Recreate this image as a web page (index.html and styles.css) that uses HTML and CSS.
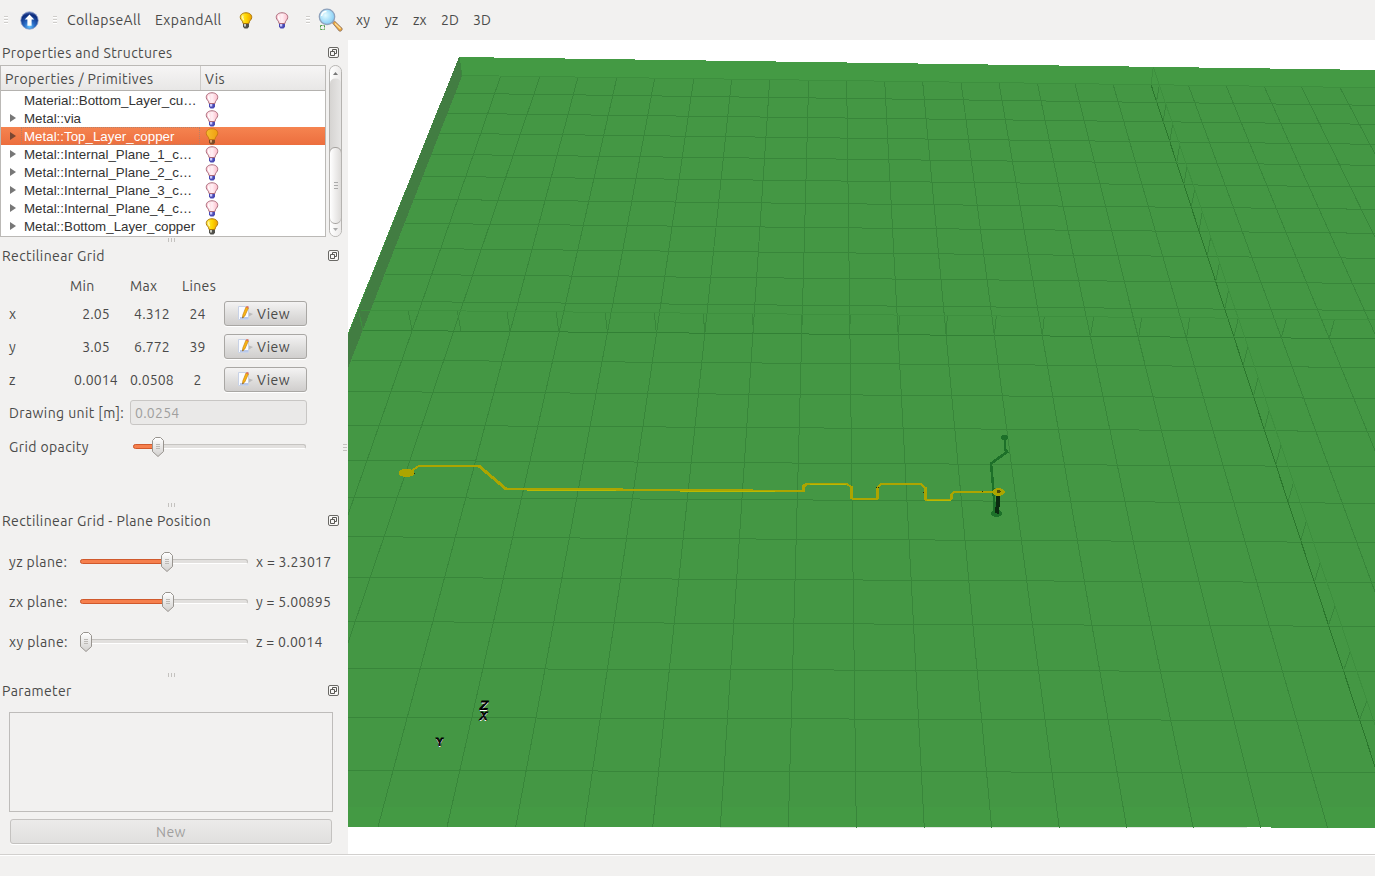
FILE: index.html
```html
<!DOCTYPE html>
<html lang="en">
<head>
<meta charset="utf-8">
<title>CSX Viewer</title>
<link rel="stylesheet" href="styles.css">
</head>
<body>
<svg class="defs" width="0" height="0" aria-hidden="true">
  <defs>
    <linearGradient id="gOn" x1="0" x2="1"><stop offset="0" stop-color="#ffe95a"/><stop offset=".5" stop-color="#ffd800"/><stop offset="1" stop-color="#f0a000"/></linearGradient>
    <linearGradient id="gSel" x1="0" x2="1"><stop offset="0" stop-color="#f6bd2e"/><stop offset="1" stop-color="#f0a010"/></linearGradient>
    <linearGradient id="gOff" x1="0" x2="1"><stop offset="0" stop-color="#ffc8d4"/><stop offset=".5" stop-color="#fff0f4"/><stop offset="1" stop-color="#ffbccb"/></linearGradient>
    <linearGradient id="gHandle" x1="0" y1="0" x2="0" y2="1"><stop offset="0" stop-color="#fff"/><stop offset="1" stop-color="#d2d0ce"/></linearGradient>
    <radialGradient id="gBlue" cx=".5" cy=".85" r=".85"><stop offset="0" stop-color="#5fc0ff"/><stop offset=".35" stop-color="#2a6bc4"/><stop offset=".8" stop-color="#0c2a7c"/><stop offset="1" stop-color="#5a76b8"/></radialGradient>
    <radialGradient id="gLens" cx=".4" cy=".4" r=".65"><stop offset="0" stop-color="#e4fbff"/><stop offset="1" stop-color="#7ecbf5"/></radialGradient>
    <symbol id="bulb-on" viewBox="0 0 14 17">
      <path d="M4 11.500h6v3.300l-1.500 1.700h-3L4 14.800z" fill="#50504a"/><path d="M5 12h2v2.500H5z" fill="#c8c8c0"/>
      <path d="M7 .8c3.900 0 6 2.200 5.700 4.800-.2 2.300-2.500 3.100-2.800 5.900H4.100C3.800 8.700 1.500 7.900 1.300 5.600 1 3 3.100.8 7 .8z" fill="url(#gOn)" stroke="#a87408"/>
      <path d="M4 3.500c-.8 1.600-.2 3.200.6 4.600" fill="none" stroke="#fff9b0" stroke-width="1.300"/>
    </symbol>
    <symbol id="bulb-sel" viewBox="0 0 14 17">
      <path d="M4 11.500h6v3.300l-1.500 1.700h-3L4 14.800z" fill="#7c4a28"/><path d="M5 12h2v2.500H5z" fill="#d8a070"/>
      <path d="M7 .8c3.900 0 6 2.200 5.700 4.800-.2 2.300-2.500 3.100-2.800 5.900H4.100C3.800 8.700 1.500 7.900 1.300 5.600 1 3 3.100.8 7 .8z" fill="url(#gSel)" stroke="#c87814"/>
    </symbol>
    <symbol id="bulb-off" viewBox="0 0 14 17">
      <path d="M4 11.500h6v3.300l-1.500 1.700h-3L4 14.800z" fill="#4a4ab4"/><path d="M5 12h2.300v2.500H5z" fill="#c8c8ff"/>
      <path d="M7 .8c3.900 0 6 2.200 5.700 4.800-.2 2.300-2.500 3.100-2.800 5.900H4.100C3.800 8.700 1.500 7.900 1.300 5.600 1 3 3.100.8 7 .8z" fill="url(#gOff)" stroke="#a86878"/>
      <path d="M4 3.500c-.8 1.600-.2 3.200.6 4.600" fill="none" stroke="#fff" stroke-width="1.300"/>
    </symbol>
    <symbol id="float" viewBox="0 0 11 11">
      <rect x=".5" y=".5" width="10" height="10" rx="1.500" fill="#f8f7f6" stroke="#6a6965"/>
      <path d="M4.500 4.500v-2h4v4h-2M2.500 4.500h4v4h-4z" fill="none" stroke="#5a5955"/>
    </symbol>
    <symbol id="note" viewBox="0 0 17 17">
      <path d="M12 7.500l4 1.500-4 2.500z" fill="#bbb"/>
      <path d="M1.500 1.500h10v13h-10z" fill="#fbfcff" stroke="#c8d2e6"/><path d="M3 12h8v2H3z" fill="#b8c8ea"/>
      <path d="M9 2l2.400 1-3.600 8-2.200 2 .2-3z" fill="#f9b512" stroke="#c88418" stroke-width=".7"/><path d="M8.800 2.200l1.200-1.200 1.700.8-.5 1.400z" fill="#e86a50"/>
      <path d="M5.500 13l.2-1.500.9.400z" fill="#333"/>
    </symbol>
    <symbol id="handle" viewBox="0 0 12 20">
      <path d="M3.500 .5h5l3 3v11l-5.500 5-5.500-5v-11z" fill="url(#gHandle)" stroke="#98948f"/>
      <path d="M4 7.500h4M4 9.500h4M4 11.500h4" stroke="#bcb9b5"/>
    </symbol>
  </defs>
</svg>

<div class="window">
  <header class="toolbar">
    <span class="grip grip-a"></span>
    <svg class="ico-up" viewBox="0 0 20 20"><circle cx="10" cy="10" r="9.200" fill="url(#gBlue)" stroke="#8a9cc8" stroke-width=".8"/><path d="M10 3.800l5 5.200h-2.800v6.500H7.800V9H5z" fill="#fff"/></svg>
    <span class="grip grip-b"></span>
    <span class="tool t-collapse">CollapseAll</span>
    <span class="tool t-expand">ExpandAll</span>
    <svg class="ico-bulb b1"><use href="#bulb-on"/></svg>
    <svg class="ico-bulb b2"><use href="#bulb-off"/></svg>
    <span class="grip grip-c"></span>
    <svg class="ico-zoom" viewBox="0 0 25 25"><path d="M14.500 15l2-2 7.500 7.300c.8 1.600-1.200 3.600-2.800 2.700z" fill="#eda63a" stroke="#8b7468" stroke-width=".9"/><path d="M17 15.500l5.500 5.300" stroke="#ffe09a" stroke-width="1.300"/><circle cx="9" cy="8.800" r="7.700" fill="url(#gLens)" stroke="#8fa2bc" stroke-width="1.300"/><path d="M3.500 8c.5-3 2.500-4.500 5-4.500" fill="none" stroke="#fff" stroke-width="1.500"/><path d="M2.500 19.500v-2h2M5.500 17.500h1v2M2.500 20.500v1h2M5.500 21.500h1v-1" fill="none" stroke="#4c9c48"/></svg>
    <span class="tool t-xy">xy</span><span class="tool t-yz">yz</span><span class="tool t-zx">zx</span><span class="tool t-2d">2D</span><span class="tool t-3d">3D</span>
  </header>

  <div class="main">
    <aside class="side">
      <section class="dock dock-tree">
        <h2 class="dock-title"><span>Properties and Structures</span><svg class="float"><use href="#float"/></svg></h2>
        <div class="tree-wrap">
          <div class="tree">
            <div class="tree-head"><span class="th-name">Properties / Primitives</span><span class="th-vis">Vis</span></div>
            <div class="row"><i class="leaf"></i><span class="name">Material::Bottom_Layer_cu…</span><svg class="vis"><use href="#bulb-off"/></svg></div>
            <div class="row"><i class="arrow"></i><span class="name">Metal::via</span><svg class="vis"><use href="#bulb-off"/></svg></div>
            <div class="row selected"><i class="arrow"></i><span class="name">Metal::Top_Layer_copper</span><svg class="vis"><use href="#bulb-sel"/></svg></div>
            <div class="row"><i class="arrow"></i><span class="name">Metal::Internal_Plane_1_c…</span><svg class="vis"><use href="#bulb-off"/></svg></div>
            <div class="row"><i class="arrow"></i><span class="name">Metal::Internal_Plane_2_c…</span><svg class="vis"><use href="#bulb-off"/></svg></div>
            <div class="row"><i class="arrow"></i><span class="name">Metal::Internal_Plane_3_c…</span><svg class="vis"><use href="#bulb-off"/></svg></div>
            <div class="row"><i class="arrow"></i><span class="name">Metal::Internal_Plane_4_c…</span><svg class="vis"><use href="#bulb-off"/></svg></div>
            <div class="row"><i class="arrow"></i><span class="name">Metal::Bottom_Layer_copper</span><svg class="vis"><use href="#bulb-on"/></svg></div>
          </div>
          <div class="scroll"><div class="cap"><i class="tri up"></i></div><div class="thumb"><i></i><i></i><i></i></div><div class="cap cap-end"><i class="tri down"></i></div></div>
        </div>
      </section>
      <div class="split"><i></i><i></i><i></i></div>

      <section class="dock dock-grid">
        <h2 class="dock-title"><span>Rectilinear Grid</span><svg class="float"><use href="#float"/></svg></h2>
        <div class="grid-head"><span></span><span>Min</span><span>Max</span><span>Lines</span></div>
        <div class="grid-row"><span>x</span><b>2.05</b><b>4.312</b><b>24</b><button class="btn"><svg><use href="#note"/></svg>View</button></div>
        <div class="grid-row"><span>y</span><b>3.05</b><b>6.772</b><b>39</b><button class="btn"><svg><use href="#note"/></svg>View</button></div>
        <div class="grid-row"><span>z</span><b>0.0014</b><b>0.0508</b><b>2</b><button class="btn"><svg><use href="#note"/></svg>View</button></div>
        <div class="unit-row"><label>Drawing unit [m]:</label><div class="field">0.0254</div></div>
        <div class="opacity-row"><label>Grid opacity</label><div class="slider"><div class="fill" style="width:15%"></div><svg class="handle" style="left:19px"><use href="#handle"/></svg></div></div>
      </section>
      <div class="split"><i></i><i></i><i></i></div>

      <section class="dock dock-plane">
        <h2 class="dock-title"><span>Rectilinear Grid - Plane Position</span><svg class="float"><use href="#float"/></svg></h2>
        <div class="plane-row first"><label>yz plane:</label><div class="slider"><div class="fill" style="width:52%"></div><svg class="handle" style="left:81px"><use href="#handle"/></svg></div><span>x = 3.23017</span></div>
        <div class="plane-row"><label>zx plane:</label><div class="slider"><div class="fill" style="width:52%"></div><svg class="handle" style="left:82px"><use href="#handle"/></svg></div><span>y = 5.00895</span></div>
        <div class="plane-row"><label>xy plane:</label><div class="slider"><svg class="handle" style="left:0px"><use href="#handle"/></svg></div><span>z = 0.0014</span></div>
      </section>
      <div class="split"><i></i><i></i><i></i></div>

      <section class="dock dock-param">
        <h2 class="dock-title"><span>Parameter</span><svg class="float"><use href="#float"/></svg></h2>
        <div class="param-list"></div>
        <button class="btn btn-new">New</button>
      </section>
      <div class="vsplit"><i></i><i></i><i></i></div>
    </aside>

    <main class="view">
      <svg class="scene" viewBox="348 40 1027 814" shape-rendering="crispEdges">
        <!-- board faces -->
        <path d="M459 57L1375 70V827.570L348 827V333z" fill="#449a44"/>
        <path d="M462 76L1375 88V807H348V366z" fill="#449744"/>
        <path d="M459 57L348 335V368L462 76z" fill="#427d42"/>
        <path d="M720 827.500H1247" stroke="#dfe6df"/>
        <!-- rows -->
        <g fill="none" stroke="#38863a">
          <path d="M455 93.300L1375 105.300M447.500 113.300L1375 124.300M439.500 133.300L1375 144.300M431.500 154.300L1375 165.300M423 176.300L1375 187M414 199.300L1375 209.300M405 223.300L1375 233.300M395 248.300L1375 258.300M385 274.300L1375 283.500M374.500 301.300L1375 310.500"/>
          <path d="M352 360L1375 367.500M348 391.500L1375 398.500M348 425L1375 431.500M348 460.200L1375 466.700M348 497.300L1375 503.300M348 536.700L1375 542.500M348 577.300L1375 582.700M348 621.500L1375 626.400M348 668.300L1375 671.900M348 717.400L1375 720.700M348 770.400L1375 772.900"/>
        <!-- columns -->
          <path d="M500.700 76L348 515M539.700 77L348 643M578 77L378 827M616.700 78L447 827M654.700 78L515.700 827M693.700 79L584.300 827M731.700 79L652.700 827M769.700 80L720.300 827M808.700 80L788.300 827M846.700 81L856.300 828M884.700 81L924.300 828M922.700 82L991.700 828M961 82L1059.300 828M999 83L1126.700 828M1037.300 83L1193.300 828M1075 84L1260.700 828M1113 84L1327.700 828"/>
          <path d="M1188.300 85L1462 828M1226.300 86L1529 828M1264 86L1596 828M1301.700 87L1663 828M1339.700 87L1730 828"/>
        </g>
        <g fill="none"><path d="M1151 84.500L1375 766.700" stroke="#2b772d"/><path d="M363 330.300L1375 338.700" stroke="#328035"/></g>
        <!-- lower grid plane seen through the board -->
        <g fill="none" stroke="#38863a">
          <path d="M408.300 311L412.300 331M457.300 311L461 331M507 312L510 332M556.300 312L558.700 332M605.300 313L607.300 332M654.300 313L656.300 333M703.700 313L704.300 333M752.700 314L753.300 334M801.500 314V334M850.300 314L849.700 334M899.700 315L898.300 335M947.300 315L946.300 335M996.300 316L994.300 336M1044.300 316L1042.300 336M1093.700 317L1090.300 337M1141.700 317L1138.700 337M1189.700 318L1186.700 337M1286.300 319L1281.300 338M1334.700 319L1329.300 338"/>
          <path d="M1156.300 102.700l3-17.700M1163 122.700l3-19.300M1169.700 141.700l3-17.700M1176.700 163.300l3-18.300M1183.700 185l3.300-18.300M1191.300 206.700l3.400-17.300M1199 231l3.300-19.300M1207.300 255.700l3.400-19M1215.700 281.700l3.600-18.400M1224.700 309.300l4-19.300M1233.700 337.700l4.600-19.400M1243.200 365.700l4.800-19.700M1253.400 396.700l4.800-19.700M1264.300 430l5-19.700M1275.800 465l5.200-19.700M1288 502l5.500-19.800M1300.700 541l5.600-19.800M1314.300 582.300l6-20M1328.300 625.700l6.700-20M1343.300 671.300l7-19.600M1359.300 720.300l7.700-19.600"/>
        </g>
        <path d="M1153.300 67L1245 338L1320 561.700L1375 725M462 75.500L1375 87.700M359 310L1375 319.500M1151 84.500l2.300-18M359 313l4 17" fill="none" stroke="#3d8f3e"/>
        <path d="M459 57L462 76" stroke="#3c863e"/>
        <!-- bottom copper and via -->
        <g fill="none" stroke="#1d7029" stroke-width="2.600"><path d="M1005 440v9l2 3-16 11.500L993 485l2 27"/></g>
        <ellipse cx="1004.500" cy="437.800" rx="3.500" ry="2.700" fill="#1d7029"/>
        <ellipse cx="996.500" cy="513.300" rx="5.500" ry="3.700" fill="#1d7029"/>
        <path d="M998.500 495l-1.500 18.500" stroke="#0b2a10" stroke-width="4"/>
        <!-- top copper trace -->
        <g fill="none" stroke="#aca500" stroke-width="2" stroke-linejoin="round">
          <path d="M408 473L419 466H479.500L506.500 489H622.500M616 490H700L804 491V486L808 484H847L851.500 487.500V498.500H877.500V487L881 484H921L925 487.500V499.500H951V495L954 492H997"/>
          <path d="M479 466L506 489M803.500 490V486L808 483.500M851.500 486V498.500M877.500 498V487M925 487V499.500M951 499V495" stroke-width="3"/>
          <path d="M527 490.500H616M680 491.500H775M810 484.500H846M927 500.500H951" stroke="#bcb800" stroke-width="1"/>
        </g>
        <ellipse cx="406.500" cy="473" rx="7.700" ry="4.200" fill="#aca500"/>
        <path d="M413.500 473.500h1.500M876 487.500h1M878 487.500h1M923 492.500h1M982 491.500h1" stroke="#2b2b05"/>
        <ellipse cx="998.700" cy="492" rx="6" ry="4" fill="#aca500"/><ellipse cx="998.700" cy="491.700" rx="2" ry="1.700" fill="#4b4808"/>
      </svg>
      <span class="axis axis-z">Z</span><span class="axis axis-x">X</span><span class="axis axis-y">Y</span>
    </main>
  </div>
  <footer class="status"></footer>
</div>
</body>
</html>
```

FILE: styles.css
```css
* { box-sizing: border-box; }
body { margin: 0; background: #f2f1f0; color: #4a4a49; font: 14px/20px Ubuntu, "Noto Sans", sans-serif; overflow: hidden; }
.defs { position: absolute; }
.window { width: 1375px; height: 876px; display: flex; flex-direction: column; }
span, label { white-space: nowrap; }

.toolbar { height: 40px; display: flex; align-items: center; flex: none; }
.grip { width: 4px; height: 8px; flex: none; background: repeating-linear-gradient(#cfcdca 0 1px, #fff 1px 2px, transparent 2px 3px); }
.grip-a { margin-left: 4px; }
.grip-b { margin-left: 14px; }
.grip-c { margin-left: 17px; }
.ico-up { width: 19px; height: 19px; margin-left: 12px; flex: none; }
.tool { flex: none; }
.t-collapse { width: 88px; margin-left: 10px; letter-spacing: .4px; }
.t-expand { width: 84px; letter-spacing: .38px; }
.ico-bulb { width: 14px; height: 17px; flex: none; }
.b2 { margin-left: 22px; }
.ico-zoom { width: 25px; height: 25px; margin-left: 8px; flex: none; }
.t-xy { margin-left: 13px; width: 29px; letter-spacing: .2px; }
.t-yz { width: 28px; }
.t-zx { width: 28px; }
.t-2d { width: 32px; }

.main { display: flex; height: 814px; flex: none; }
.side { width: 348px; position: relative; flex: none; display: flex; flex-direction: column; }
.view { position: relative; flex: 1; background: #fff; }
.scene { display: block; width: 1027px; height: 814px; }

.dock { flex: none; }
.dock-title { margin: 0; height: 25px; font-size: 14px; font-weight: 400; letter-spacing: .39px; display: flex; align-items: center; justify-content: space-between; padding: 0 9px 0 2px; }
.float { width: 11px; height: 11px; }
.dock-tree { height: 197px; }
.dock-grid { height: 259px; }
.dock-plane { height: 164px; }
.dock-param { height: 170px; }
.split { height: 6px; display: flex; justify-content: center; gap: 2px; padding: 1px 5px 1px 0; flex: none; }
.split i { width: 1px; background: #c4c2bf; }
.vsplit { position: absolute; left: 343px; top: 404px; display: flex; flex-direction: column; gap: 2px; }
.vsplit i { width: 4px; height: 1px; background: #c4c2bf; }

.tree-wrap { display: flex; height: 172px; gap: 3px; }
.tree { width: 326px; border: 1px solid #bbb9b6; background: #fff; flex: none; overflow: hidden; font: 13.330px/18px "Liberation Sans", sans-serif; color: #333; }
.tree-head { height: 25px; display: flex; align-items: center; color: #4a4a49; font: 14px/20px Ubuntu, "Noto Sans", sans-serif; letter-spacing: .4px; background: linear-gradient(#f6f5f5, #e8e7e6); border-bottom: 1px solid #b4b2af; }
.th-name { width: 200px; height: 24px; padding: 1px 0 0 4px; border-right: 1px solid #cdcbc8; line-height: 25px; }
.th-vis { padding: 2px 0 0 4px; }
.row { display: flex; height: 18px; align-items: center; }
.row .name { width: 181px; height: 18px; line-height: 20px; }
.row i { margin-left: 9px; width: 6px; margin-right: 8px; flex: none; }
.arrow { height: 8px; background: #777; clip-path: polygon(0 0, 100% 50%, 0 100%); }
.selected .arrow { background: #7a4632; }
.vis { width: 14px; height: 17px; flex: none; }
.selected { background: linear-gradient(#f58450, #ec6e3e); color: #fff; }
.row.selected .name { outline: 1px dotted #b88068; outline-offset: -1px; margin-left: -3px; padding-left: 3px; width: 179px; margin-right: 5px; }

.scroll { width: 13px; border: 1px solid #b5b3b0; border-radius: 7px; display: flex; flex-direction: column; align-items: center; background: linear-gradient(90deg, #d6d4d2, #e6e5e4); overflow: hidden; }
.cap { width: 11px; height: 18px; margin-bottom: -6px; flex: none; display: flex; justify-content: center; background: linear-gradient(90deg, #fff, #eceae9); clip-path: path("M0 0H11V18Q11 12.500 5.500 12.500Q0 12.500 0 18Z"); }
.cap-end { height: 20px; margin: -6px 0 0; clip-path: path("M0 0Q0 6 5.500 6Q11 6 11 0V20H0Z"); }
.tri { width: 5px; height: 3px; flex: none; background: #777; }
.up { clip-path: polygon(50% 0, 100% 100%, 0 100%); margin-top: 6px; }
.down { clip-path: polygon(0 0, 100% 0, 50% 100%); margin-top: 10px; background: #aaa; }
.thumb { width: 13px; height: 77px; margin: 69px -1px 0; flex: none; border: 1px solid #a5a29f; border-radius: 6px; background: linear-gradient(90deg, #fff, #dddbd9); display: flex; flex-direction: column; gap: 2px; align-items: center; justify-content: center; }
.thumb i { width: 4px; height: 1px; background: #aaa; }

.grid-head, .grid-row { display: grid; grid-template-columns: 57px 60px 52px 40px 83px; padding-left: 9px; align-items: center; }
.grid-head { height: 29px; padding-top: 7px; padding-left: 13px; letter-spacing: .35px; }
.grid-row { height: 33px; grid-template-columns: 59px 56px 56px 35px 83px; letter-spacing: .15px; }
.grid-row b { font-weight: 400; text-align: center; }
.grid-row .btn { margin-left: 9px; }
.btn { font: inherit; letter-spacing: .4px; color: inherit; width: 83px; height: 25px; padding: 0 4px 0 0; border: 1px solid #a9a7a4; border-radius: 3px; background: linear-gradient(#f4f3f3, #dddcdb 60%, #d0cecd); display: flex; align-items: center; justify-content: center; gap: 3px; box-shadow: 0 1px 0 #fff; }
.btn svg { width: 17px; height: 17px; }
.unit-row { display: flex; align-items: center; height: 33px; padding-left: 9px; }
.unit-row label { width: 121px; letter-spacing: .41px; }
.field { width: 177px; height: 25px; border: 1px solid #c8c6c4; border-radius: 3px; background: #eae9e8; color: #a09f9e; padding: 2px 4px; line-height: 20px; letter-spacing: .25px; }
.opacity-row { display: flex; align-items: center; height: 35px; padding-left: 9px; }
.opacity-row label { width: 124px; letter-spacing: .4px; }
.slider { position: relative; height: 5px; width: 168px; border: 1px solid #c6c4c1; border-bottom-color: #fff; border-radius: 3px; background: #e2e0de; }
.opacity-row .slider { width: 173px; }
.fill { height: 5px; margin: -1px; border: 1px solid #d0592c; border-radius: 3px; background: #f67f4c; }
.handle { position: absolute; top: -8px; width: 12px; height: 20px; margin-left: -1px; }

.plane-row { display: flex; align-items: center; height: 40px; padding-left: 9px; }
.first { margin-top: 9px; }
.plane-row label { width: 71px; letter-spacing: .4px; }
.plane-row .slider { margin-top: -1px; }
.plane-row span { margin-left: 8px; letter-spacing: .3px; }

.param-list { width: 324px; height: 100px; margin: 9px 0 0 9px; border: 1px solid #bebcba; }
.btn-new { width: 322px; margin: 7px 0 0 10px; color: #a09f9e; border-color: #c4c2c0; background: linear-gradient(#ecebea, #e0dfde); padding: 0; }

.axis { position: absolute; font: italic bold 13px/10px "Liberation Sans", sans-serif; color: #000; text-shadow: 0 1px 0 #fff; -webkit-text-stroke: 1.200px #000; paint-order: stroke; }
.axis-z { left: 132px; top: 661px; }
.axis-x { left: 132px; top: 672px; font-size: 10.500px; line-height: 9px; }
.axis-y { left: 88px; top: 698px; font-size: 11px; line-height: 9px; font-style: normal; }

.status { flex: 1; border-top: 1px solid #d2d0ce; box-shadow: inset 0 1px 0 #fff; }
```
